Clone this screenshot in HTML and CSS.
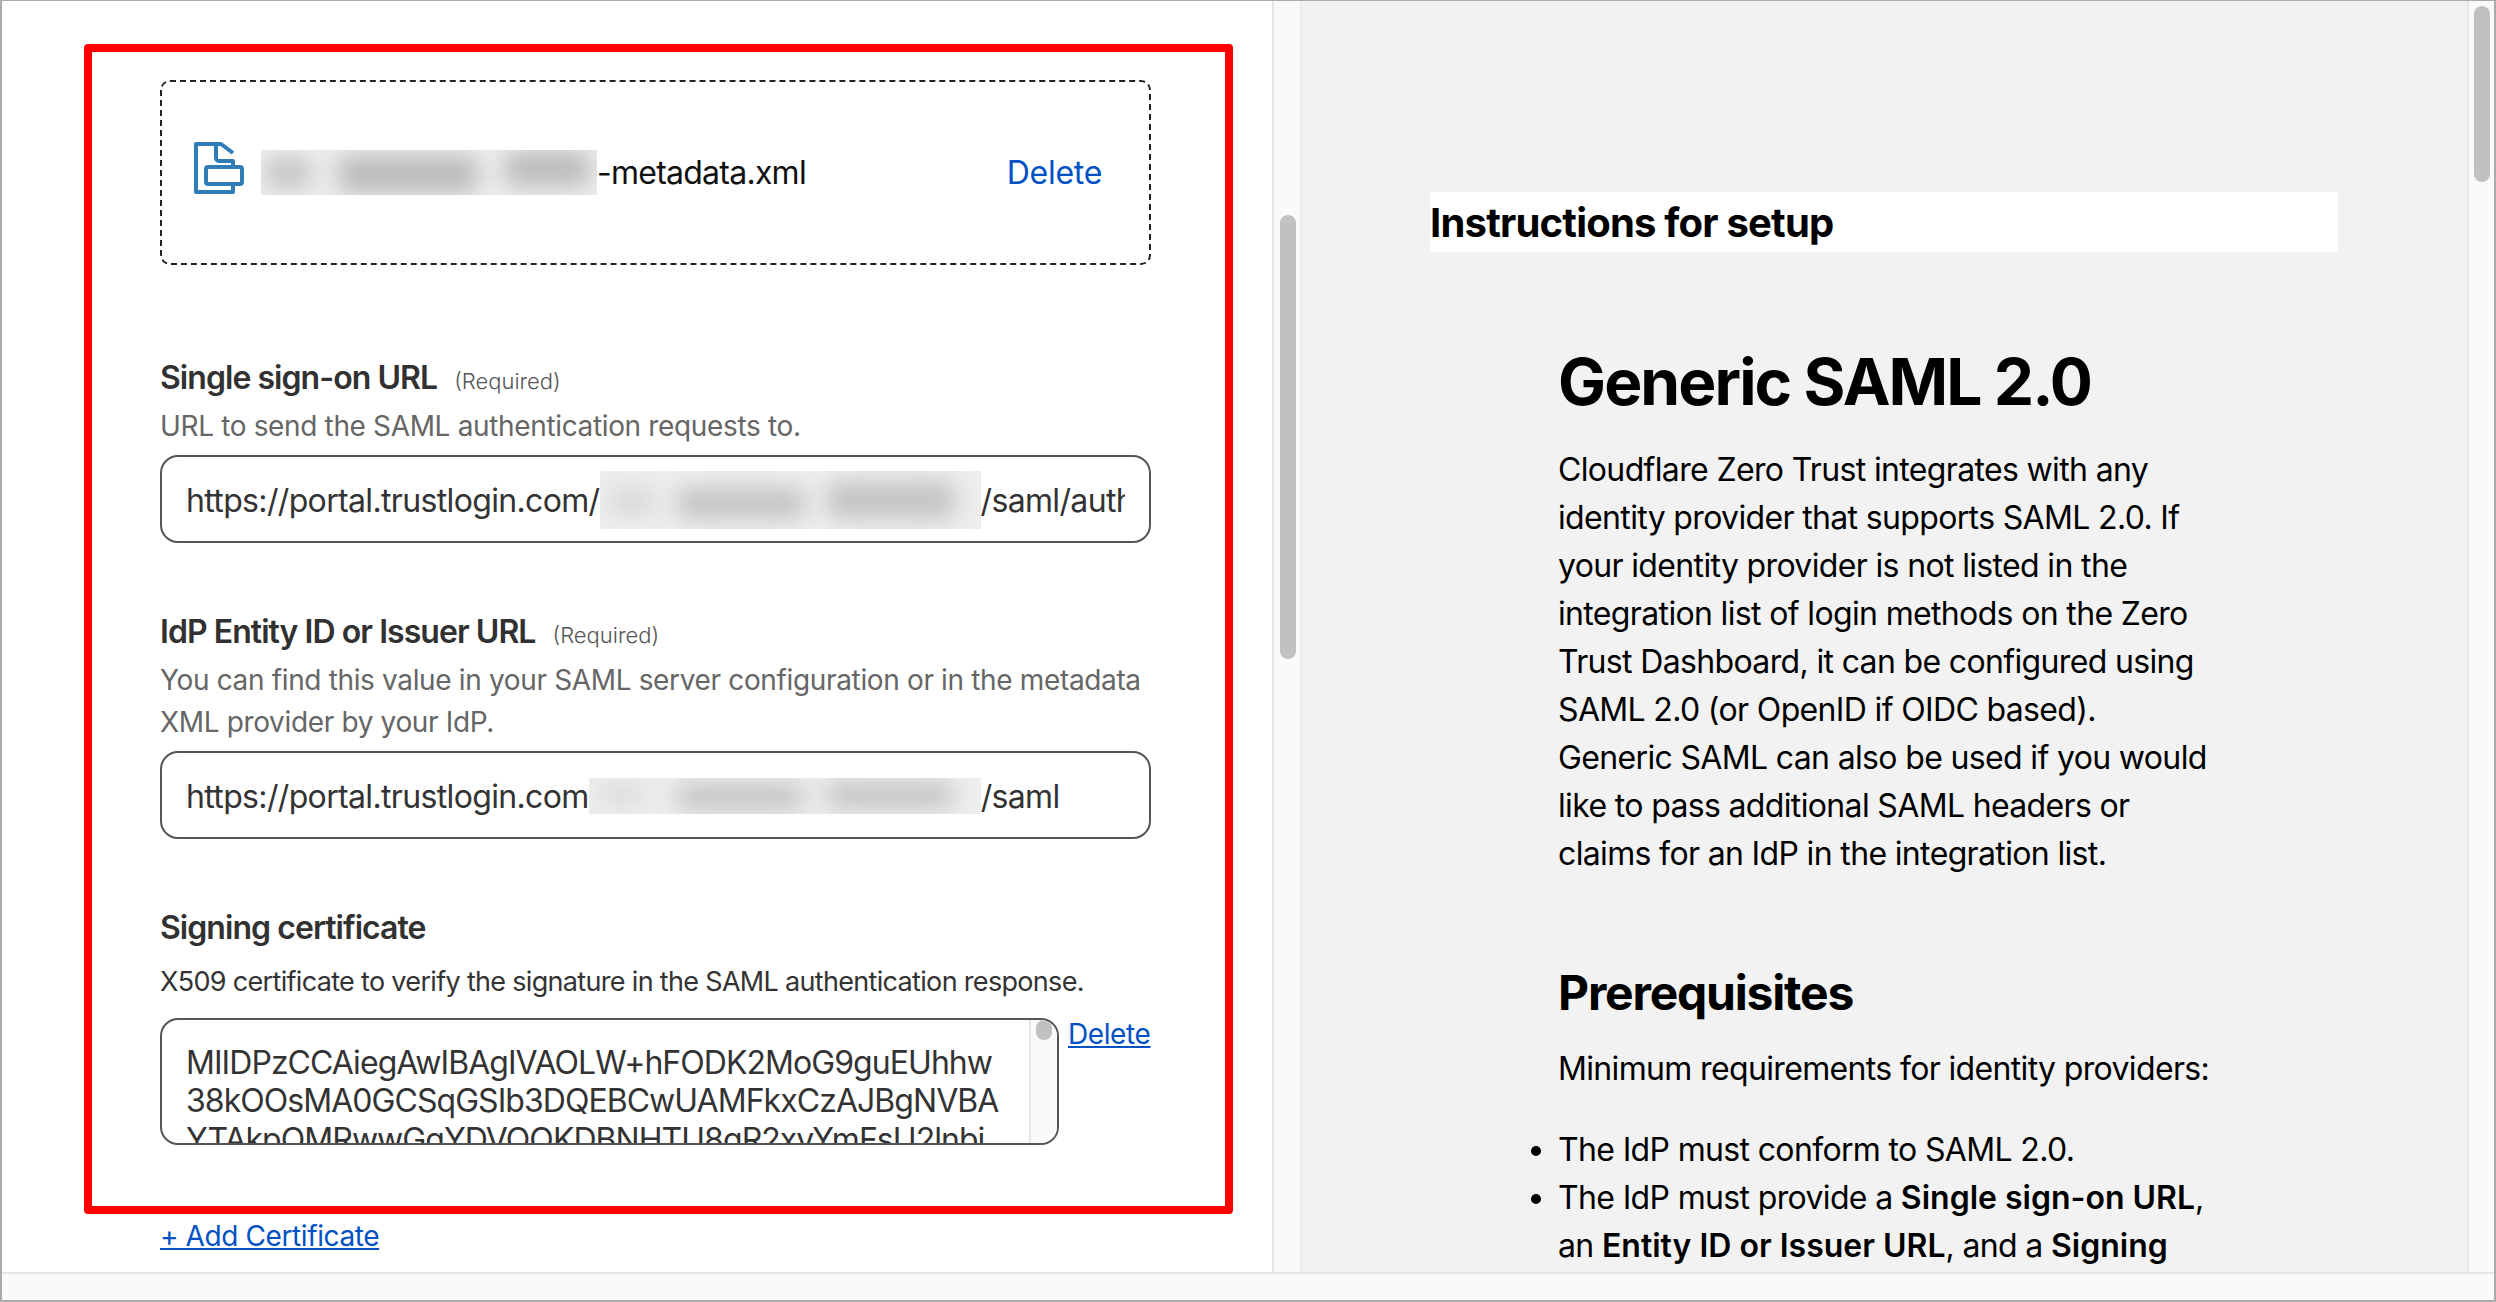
FILE: index.html
```html
<!DOCTYPE html>
<html lang="en">
<head>
    <meta charset="UTF-8">
    <title>Generic SAML 2.0</title>
    <link rel="stylesheet" href="styles.css">
</head>
<body>
    <div class="window">
        <div class="panes">
            <section class="form-pane">
                <div class="form">
                    <div class="upload">
                        <svg class="file-icon" width="50" height="52" viewBox="0 0 50 52" fill="none" stroke="#2f7cb6" stroke-width="4" stroke-linejoin="round">
                            <path d="M39 11 27 2H2v48h37v-9"/>
                            <path d="M22 2v14a3 3 0 0 0 3 3h14v6"/>
                            <rect x="12" y="25" width="36" height="17" rx="2"/>
                        </svg>
                        <span class="blur blur-file"><i class="b1"></i><i class="b2"></i><i class="b3"></i></span>
                        <span class="file-name">-metadata.xml</span>
                        <a class="upload-delete">Delete</a>
                    </div>

                    <div class="field field-sso">
                        <div class="label"><strong>Single sign-on URL</strong><span>(Required)</span></div>
                        <p class="desc">URL to send the SAML authentication requests to.</p>
                        <div class="input"><div class="input-inner"><span class="input-text">https://portal.trustlogin.com/</span><span class="blur blur-url"><i class="b1"></i><i class="b2"></i><i class="b3"></i></span><span class="input-text">/saml/auth</span></div></div>
                    </div>

                    <div class="field field-idp">
                        <div class="label"><strong>IdP Entity ID or Issuer URL</strong><span>(Required)</span></div>
                        <p class="desc">You can find this value in your SAML server configuration or in the metadata XML provider by your IdP.</p>
                        <div class="input"><div class="input-inner"><span class="input-text">https://portal.trustlogin.com</span><span class="blur blur-issuer"><i class="b1"></i><i class="b2"></i><i class="b3"></i></span><span class="input-text">/saml</span></div></div>
                    </div>

                    <div class="field field-cert">
                        <div class="label"><strong>Signing certificate</strong></div>
                        <p class="desc desc-dark">X509 certificate to verify the signature in the SAML authentication response.</p>
                        <div class="cert-row">
                            <div class="cert">
                                <div class="cert-text">MIIDPzCCAiegAwIBAgIVAOLW+hFODK2MoG9guEUhhw<br>38kOOsMA0GCSqGSIb3DQEBCwUAMFkxCzAJBgNVBA<br>YTAkpOMRwwGgYDVQQKDBNHTU8gR2xvYmFsU2lnbi</div>
                                <div class="cert-scroll"><div class="cert-thumb"></div></div>
                            </div>
                            <a class="link">Delete</a>
                        </div>
                        <a class="link add-cert">+ Add Certificate</a>
                    </div>
                </div>
                <div class="highlight"></div>
            </section>
            <div class="scrollbar scrollbar-left"><div class="thumb"></div></div>

            <section class="docs-pane">
                <h3 class="docs-title">Instructions for setup</h3>
                <article class="docs">
                    <h1>Generic SAML 2.0</h1>
                    <p>Cloudflare Zero Trust integrates with any identity provider that supports SAML 2.0. If your identity provider is not listed in the integration list of login methods on the Zero Trust Dashboard, it can be configured using SAML 2.0 (or OpenID if OIDC based). Generic SAML can also be used if you would like to pass additional SAML headers or claims for an IdP in the integration list.</p>
                    <h2>Prerequisites</h2>
                    <p>Minimum requirements for identity providers:</p>
                    <ul>
                        <li>The IdP must conform to SAML 2.0.</li>
                        <li>The IdP must provide a <b>Single sign-on URL</b>, an <b>Entity ID or Issuer URL</b>, and a <b>Signing certificate</b>.</li>
                    </ul>
                </article>
            </section>
            <div class="scrollbar scrollbar-right"><div class="thumb"></div></div>
        </div>
        <div class="hbar"></div>
    </div>
</body>
</html>
```

FILE: styles.css
```css
* {
    box-sizing: border-box;
}

html, body {
    margin: 0;
    height: 100%;
    overflow: hidden;
}

body {
    font-family: Inter, "Liberation Sans", sans-serif;
    background-color: #fff;
}

.window {
    width: 2496px;
    height: 1302px;
    border: solid #ababab;
    border-width: 1px 2px 2px 2px;
    display: flex;
    flex-direction: column;
}

.panes {
    display: flex;
    height: 1271px;
}

.hbar {
    flex: 1;
    background-color: #fafafa;
    border-top: 2px solid #e6e6e6;
}

/* left pane */

.form-pane {
    position: relative;
    width: 1270px;
    height: 100%;
    overflow: hidden;
    background-color: #fff;
}

.form {
    padding: 79px 0 0 158px;
    width: 1149px;
}

.upload {
    height: 185px;
    border: 2px dashed #222;
    border-radius: 10px;
    display: flex;
    align-items: center;
    padding: 0 47px 0 32px;
    font-size: 32px;
    letter-spacing: -0.75px;
}

.file-icon {
    flex: none;
    margin: -9px 17px 0 0;
}

.file-name {
    color: #111;
}

.upload-delete {
    margin-left: auto;
    letter-spacing: -0.3px;
    color: #0051c3;
}

.blur {
    flex: none;
    position: relative;
    overflow: hidden;
    display: block;
    background-color: #eeeeee;
}

.blur i {
    position: absolute;
    background-color: #bcbcbc;
    border-radius: 14px;
    filter: blur(11px);
}

.blur-file {
    width: 336px;
    height: 45px;
}

.blur-file .b1 { left: 2px; top: 8px; width: 50px; height: 30px; background-color: #c4c4c4; }
.blur-file .b2 { left: 76px; top: 5px; width: 142px; height: 38px; }
.blur-file .b3 { left: 242px; top: 1px; width: 88px; height: 36px; }

.blur-url {
    width: 381px;
    height: 58px;
}

.blur-url .b1 { left: 8px; top: 16px; width: 48px; height: 28px; background-color: #d8d8d8; }
.blur-url .b2 { left: 76px; top: 16px; width: 130px; height: 32px; background-color: #c4c4c4; }
.blur-url .b3 { left: 226px; top: 10px; width: 130px; height: 38px; background-color: #c4c4c4; }

.blur-issuer {
    width: 392px;
    height: 36px;
}

.blur-issuer .b1 { left: 8px; top: 6px; width: 50px; height: 22px; background-color: #dcdcdc; }
.blur-issuer .b2 { left: 86px; top: 6px; width: 130px; height: 26px; background-color: #c4c4c4; }
.blur-issuer .b3 { left: 236px; top: 4px; width: 130px; height: 26px; background-color: #c4c4c4; }

.field-sso {
    margin-top: 93px;
}

.field-idp {
    margin-top: 69px;
}

.field-cert {
    margin-top: 69px;
}

.label {
    height: 40px;
    line-height: 40px;
    margin-bottom: 7px;
    display: flex;
    align-items: baseline;
    color: #313131;
}

.label strong {
    font-size: 32px;
    font-weight: 600;
    letter-spacing: -0.95px;
}

.label span {
    margin-left: 17px;
    font-size: 22px;
    font-weight: 300;
    color: #555;
}

.field-cert .label {
    margin-bottom: 13px;
}

.desc {
    margin: 0 0 8px;
    font-size: 28px;
    letter-spacing: -0.35px;
    line-height: 42px;
    color: #666;
}

.desc-dark {
    font-size: 27px;
    letter-spacing: -0.68px;
    color: #333;
}

.input {
    width: 991px;
    height: 88px;
    padding: 0 24px;
    border: 2px solid #555;
    border-radius: 18px;
    display: flex;
    align-items: center;
    font-size: 32px;
    letter-spacing: -0.65px;
    color: #333;
}

.input-inner {
    flex: 1;
    display: flex;
    align-items: center;
    height: 100%;
    padding-top: 2px;
    overflow: hidden;
    white-space: nowrap;
}

.input-text {
    flex: none;
}

.cert-row {
    display: flex;
    align-items: flex-start;
    margin-top: 15px;
}

.cert {
    position: relative;
    width: 899px;
    height: 127px;
    border: 2px solid #555;
    border-radius: 18px;
    overflow: hidden;
    display: flex;
}

.cert-text {
    flex: 1;
    padding: 24px 0 0 24px;
    overflow: hidden;
    white-space: nowrap;
    font-size: 32px;
    letter-spacing: -0.95px;
    line-height: 38.4px;
    color: #333;
}

.cert-scroll {
    flex: none;
    width: 28px;
    background-color: #fafafa;
    border-left: 2px solid #e6e6e6;
    padding: 0 5px;
}

.cert-thumb {
    width: 16px;
    height: 20px;
    background-color: #c1c1c1;
    border-radius: 8px;
}

.link {
    color: #0051c3;
    text-decoration: underline;
    font-size: 28px;
    letter-spacing: -0.4px;
    line-height: 36px;
}

.cert-row .link {
    margin: -2px 0 0 9px;
}

.add-cert {
    display: inline-block;
    margin-top: 73px;
}

.highlight {
    position: absolute;
    left: 82px;
    top: 43px;
    width: 1149px;
    height: 1170px;
    border: 8px solid #ff0000;
    border-radius: 4px;
}

/* scrollbars */

.scrollbar {
    flex: none;
    height: 100%;
    background-color: #fafafa;
    border-left: 2px solid #e6e6e6;
}

.scrollbar-left {
    width: 30px;
    padding: 214px 0 0 6px;
    border-right: 2px solid #ececec;
}

.scrollbar-left .thumb {
    height: 444px;
}

.scrollbar-right {
    width: 27px;
    padding: 5px 0 0 5px;
}

.scrollbar-right .thumb {
    height: 176px;
}

.thumb {
    width: 16px;
    background-color: #c1c1c1;
    border-radius: 8px;
}

/* right pane */

.docs-pane {
    flex: 1;
    height: 100%;
    overflow: hidden;
    background-color: #f2f2f2;
    padding: 191px 129px 0 128px;
    color: #000;
}

.docs-title {
    margin: 0;
    height: 60px;
    line-height: 62px;
    background-color: #fff;
    font-size: 40px;
    font-weight: 700;
    letter-spacing: -0.8px;
}

.docs {
    padding: 0 125px 0 128px;
    font-size: 32px;
    line-height: 48px;
    letter-spacing: -0.65px;
}

.docs h1 {
    margin: 90px 0 0;
    font-size: 64px;
    line-height: 80px;
    font-weight: 700;
    letter-spacing: -1.9px;
}

.docs p {
    margin: 24px 0 0;
}

.docs h2 {
    margin: 85px 0 0;
    font-size: 48px;
    line-height: 60px;
    font-weight: 700;
    letter-spacing: -1.2px;
}

.docs h2 + p {
    margin-top: 22px;
}

.docs ul {
    margin: 33px 0 0;
    padding: 0;
}

.docs b {
    font-weight: 600;
    letter-spacing: 0;
}
```
